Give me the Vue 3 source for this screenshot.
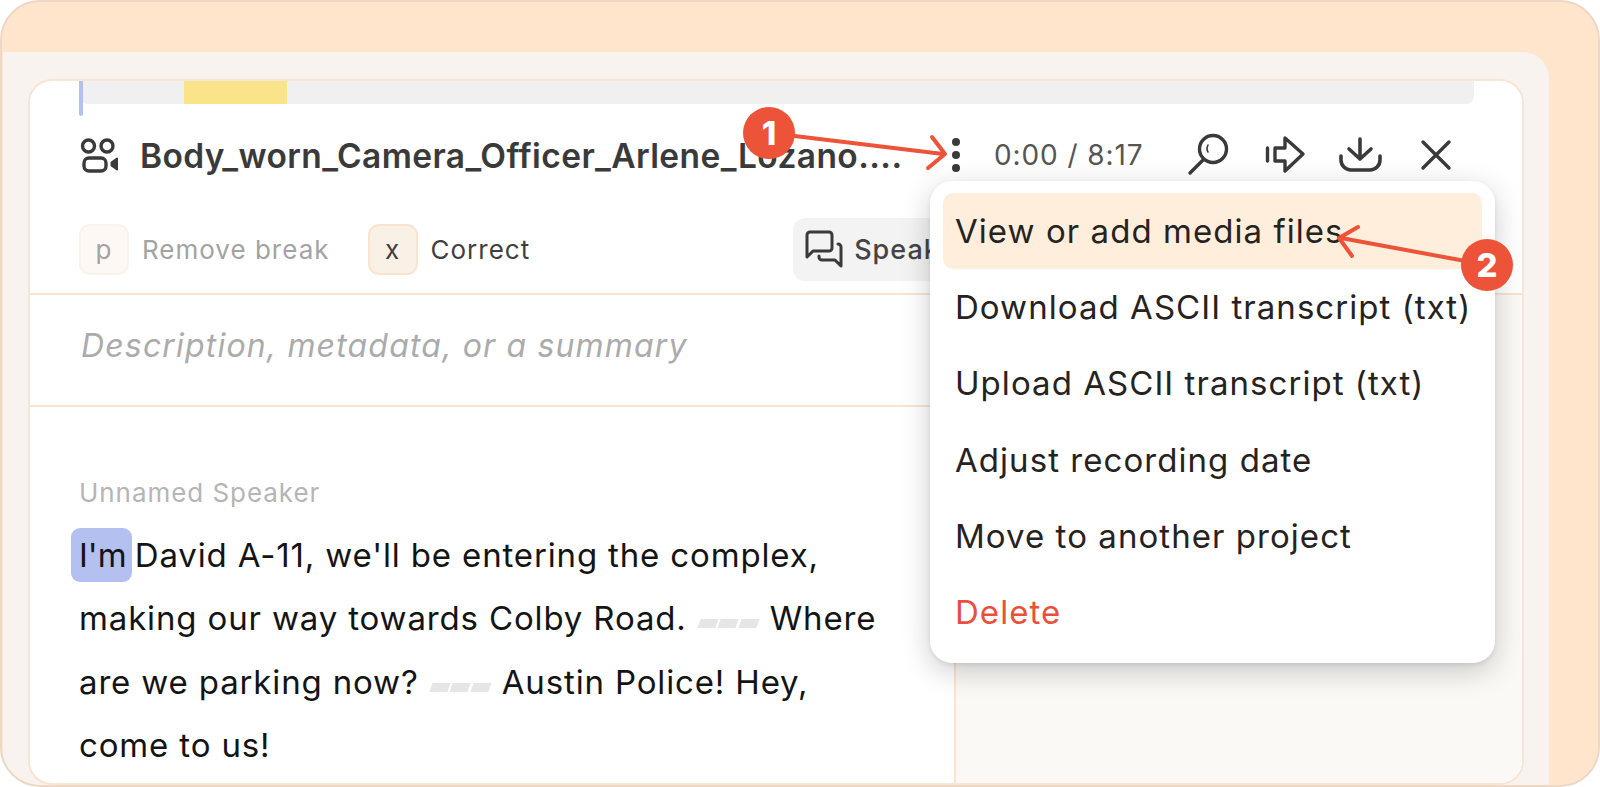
<script setup>
const menuItems = [
  { label: 'View or add media files', active: true },
  { label: 'Download ASCII transcript (txt)' },
  { label: 'Upload ASCII transcript (txt)' },
  { label: 'Adjust recording date' },
  { label: 'Move to another project' },
  { label: 'Delete', danger: true },
]
</script>

<template>
  <div class="frame">
    <div class="panel">
      <section class="card">
        <div class="timeline">
          <div class="track">
            <span class="track-mark"></span>
            <span class="playhead"></span>
          </div>
        </div>

        <header class="title-row">
          <svg class="icon-camera" viewBox="80 136 40 38" width="40" height="38" fill="none" stroke="#3a3a3a" stroke-width="3.4" stroke-linejoin="round">
            <circle cx="88.5" cy="146" r="6" />
            <circle cx="107" cy="146" r="6" />
            <rect x="84" y="158" width="22" height="13" rx="5" />
            <path d="M117 158.5v11l-5.5-4v-3z" fill="#3a3a3a" stroke-width="2" />
          </svg>
          <h1 class="title">Body_worn_Camera_Officer_Arlene_Lozano....</h1>
          <span class="dots"><i></i><i></i><i></i></span>
          <span class="time">0:00 / 8:17</span>
          <div class="actions">
            <svg viewBox="1186 130 46 44" width="46" height="44" fill="none" stroke="#3a3a3a" stroke-width="3.4" stroke-linecap="round">
              <circle cx="1213" cy="146" r="13.5" />
              <path d="M1190 170l13-13" />
              <path d="M1208 142q-2 4 0 7" stroke-width="1.6" />
            </svg>
            <svg viewBox="1264 134 42 42" width="42" height="42" fill="none" stroke="#3a3a3a" stroke-width="3.4" stroke-linejoin="round" stroke-linecap="round">
              <path d="M1267.500 148v13" />
              <path d="M1275 148h10v-10l18 16-18 17v-10h-10z" />
            </svg>
            <svg viewBox="1338 134 50 40" width="50" height="40" fill="none" stroke="#3a3a3a" stroke-width="3.6" stroke-linecap="round" stroke-linejoin="round">
              <path d="M1360 138v20M1349 148l11 10 11-10" />
              <path d="M1341 155v4a10 10 0 0 0 10 10h19a10 10 0 0 0 10-10v-4" />
            </svg>
            <svg viewBox="1420 139 32 32" width="32" height="32" fill="none" stroke="#3a3a3a" stroke-width="3.4" stroke-linecap="round">
              <path d="M1423 142l26 26M1449 142l-26 26" />
            </svg>
          </div>
        </header>

        <div class="tools">
          <div class="key-item muted"><kbd>p</kbd><span>Remove break</span></div>
          <div class="key-item"><kbd>x</kbd><span>Correct</span></div>
          <button class="speak">
            <svg viewBox="806 231 38 40" width="38" height="40" fill="none" stroke="#3a3a3a" stroke-width="3" stroke-linejoin="round" stroke-linecap="round">
              <path d="M812 233h18a3 3 0 0 1 3 3v13a3 3 0 0 1-3 3h-16l-6 6v-22a3 3 0 0 1 3-3z" />
              <path d="M839 245a3 3 0 0 1 3 3v19l-6-6h-13a3 3 0 0 1-3-3v-1" />
            </svg>
            <span>Speakers</span>
          </button>
        </div>

        <div class="columns">
          <div class="transcript">
            <div class="description">Description, metadata, or a summary</div>
            <div class="body">
              <div class="speaker">Unnamed Speaker</div>
              <p class="text">
                <span class="word">I'm</span> David A-11, we'll be entering the complex, making our way towards Colby Road.
                <span class="gap"><i></i><i></i><i></i></span>
                Where are we parking now?
                <span class="gap"><i></i><i></i><i></i></span>
                Austin Police! Hey, come to us!
              </p>
            </div>
          </div>
          <aside class="side"></aside>
        </div>

        <ul class="menu">
          <li v-for="item in menuItems" :key="item.label" :class="{ active: item.active, danger: item.danger }">{{ item.label }}</li>
        </ul>
      </section>
    </div>

    <svg class="annotations" viewBox="0 0 1600 787" width="1600" height="787" fill="none" stroke="#ec5339" stroke-width="4" stroke-linecap="round" stroke-linejoin="round">
      <path d="M770 133l173 21M932 137l13 17-17 14" />
      <path d="M1487 265l-146-27M1358 227l-19 11 13 18" />
      <circle cx="769" cy="133" r="26" fill="#ec5339" stroke="none" />
      <circle cx="1487" cy="265" r="26" fill="#ec5339" stroke="none" />
      <text x="769" y="145" class="num">1</text>
      <text x="1487" y="277" class="num">2</text>
    </svg>
  </div>
</template>

<style>
body { margin: 0; }
</style>

<style scoped>
.frame {
  position: relative;
  box-sizing: border-box;
  width: 1600px;
  height: 787px;
  padding: 50px 49px 0 1px;
  overflow: hidden;
  background: #ffe5cc;
  border: 2px solid #ecd8c5;
  border-radius: 40px;
  font-family: Inter, "Liberation Sans", sans-serif;
  color: #26221e;
}
.panel {
  box-sizing: border-box;
  height: 733px;
  padding: 27px 25px 0;
  background: #f8f3ee;
  border-radius: 0 26px 0 0;
}
.card {
  position: relative;
  box-sizing: border-box;
  width: 1496px;
  height: 706px;
  display: flex;
  flex-direction: column;
  overflow: hidden;
  background: #fff;
  border: 2px solid #f8e5d3;
  border-radius: 24px;
}
.timeline { padding: 0 48px 0 50px; }
.track {
  position: relative;
  height: 23px;
  background: #f0f0f0;
  border-radius: 0 0 8px 8px;
}
.track-mark {
  position: absolute;
  left: 104px;
  width: 103px;
  height: 23px;
  background: #f9e48a;
}
.playhead {
  position: absolute;
  left: -1px;
  width: 4px;
  height: 35px;
  background: #b4c1f0;
  border-radius: 0 0 2px 2px;
}
.title-row {
  display: flex;
  align-items: center;
  height: 102px;
  padding-left: 50px;
}
.icon-camera { flex: none; }
.title {
  width: 812px;
  flex: none;
  margin: 2px 0 0 20px;
  font-size: 33.5px;
  font-weight: 570;
  letter-spacing: 0.4px;
  white-space: nowrap;
  color: #3a3a3a;
}
.dots {
  display: flex;
  flex-direction: column;
  gap: 5px;
  width: 8px;
  flex: none;
}
.dots i {
  width: 8px;
  height: 8px;
  border-radius: 50%;
  background: #3a3a3a;
}
.time {
  margin-left: 34px;
  width: 192px;
  flex: none;
  font-size: 28px;
  letter-spacing: 0.9px;
  color: #555;
  white-space: nowrap;
}
.actions {
  display: flex;
  align-items: center;
  gap: 32px;
}
.tools {
  display: flex;
  align-items: center;
  height: 87px;
  padding-left: 49px;
  border-bottom: 2px solid #f9e4d1;
}
.key-item {
  display: flex;
  align-items: center;
  gap: 13px;
  margin-right: 38px;
  font-size: 26px;
  letter-spacing: 1px;
  color: #3f3f3f;
}
kbd {
  box-sizing: border-box;
  width: 50px;
  height: 51px;
  display: flex;
  align-items: center;
  justify-content: center;
  font-family: inherit;
  font-size: 26px;
  color: #3f3f3f;
  background: #f9f0e6;
  border: 2px solid #f9e4d1;
  border-radius: 11px;
}
.muted { color: #a3a3a3; }
.muted kbd {
  color: #a3a3a3;
  background: #fdf8f3;
  border-color: #fbf2e9;
}
.speak {
  display: flex;
  align-items: center;
  gap: 11px;
  height: 63px;
  width: 240px;
  margin-left: 225px;
  padding: 0 0 0 12px;
  border: 0;
  border-radius: 12px;
  background: #f3f3f3;
  font: 500 27px Inter, "Liberation Sans", sans-serif;
  letter-spacing: 1px;
  color: #444;
}
.columns {
  flex: 1;
  display: flex;
  min-height: 0;
}
.transcript {
  box-sizing: border-box;
  width: 926px;
  flex: none;
  border-right: 2px solid #f9e4d1;
}
.description {
  box-sizing: border-box;
  height: 112px;
  padding: 31px 0 0 51px;
  border-bottom: 2px solid #f9e4d1;
  font-size: 32px;
  font-style: italic;
  letter-spacing: 1.17px;
  color: #ababab;
}
.body { padding: 70px 0 0 49px; }
.speaker {
  font-size: 26px;
  letter-spacing: 0.95px;
  line-height: 32px;
  color: #b5b5b5;
}
.text {
  width: 806px;
  margin: 15px 0 0;
  font-size: 33px;
  letter-spacing: 0.85px;
  line-height: 63.4px;
  color: #141414;
}
.word {
  margin: 0 -7px 0 -8px;
  padding: 7px 5px 7px 8px;
  letter-spacing: 0;
  background: #b4c1f0;
  border-radius: 9px;
}
.gap {
  display: inline-flex;
  gap: 3px;
  margin: 0 2px;
  vertical-align: 2px;
}
.gap i {
  width: 17.600px;
  height: 9px;
  background: #e6e6e6;
  transform: skewX(-20deg);
}
.side {
  flex: 1;
  background: #fbf9f6;
}
.menu {
  position: absolute;
  left: 900px;
  top: 100px;
  box-sizing: border-box;
  width: 565px;
  height: 482px;
  margin: 0;
  padding: 12px 13px;
  list-style: none;
  background: #fff;
  border-radius: 22px;
  box-shadow: 0 8px 30px rgba(0, 0, 0, 0.2), 0 2px 4px rgba(0, 0, 0, 0.08);
}
.menu li {
  height: 76.2px;
  display: flex;
  align-items: center;
  padding-left: 12px;
  border-radius: 10px;
  font-size: 33px;
  letter-spacing: 1.05px;
  white-space: nowrap;
  color: #26221e;
}
.menu li.active { background: #ffeedc; }
.menu li.danger { color: #e9503c; }
.annotations {
  position: absolute;
  left: -2px;
  top: -2px;
  pointer-events: none;
}
.num {
  font: 800 33px Inter, "Liberation Sans", sans-serif;
  fill: #fff;
  stroke: none;
  text-anchor: middle;
}
</style>
